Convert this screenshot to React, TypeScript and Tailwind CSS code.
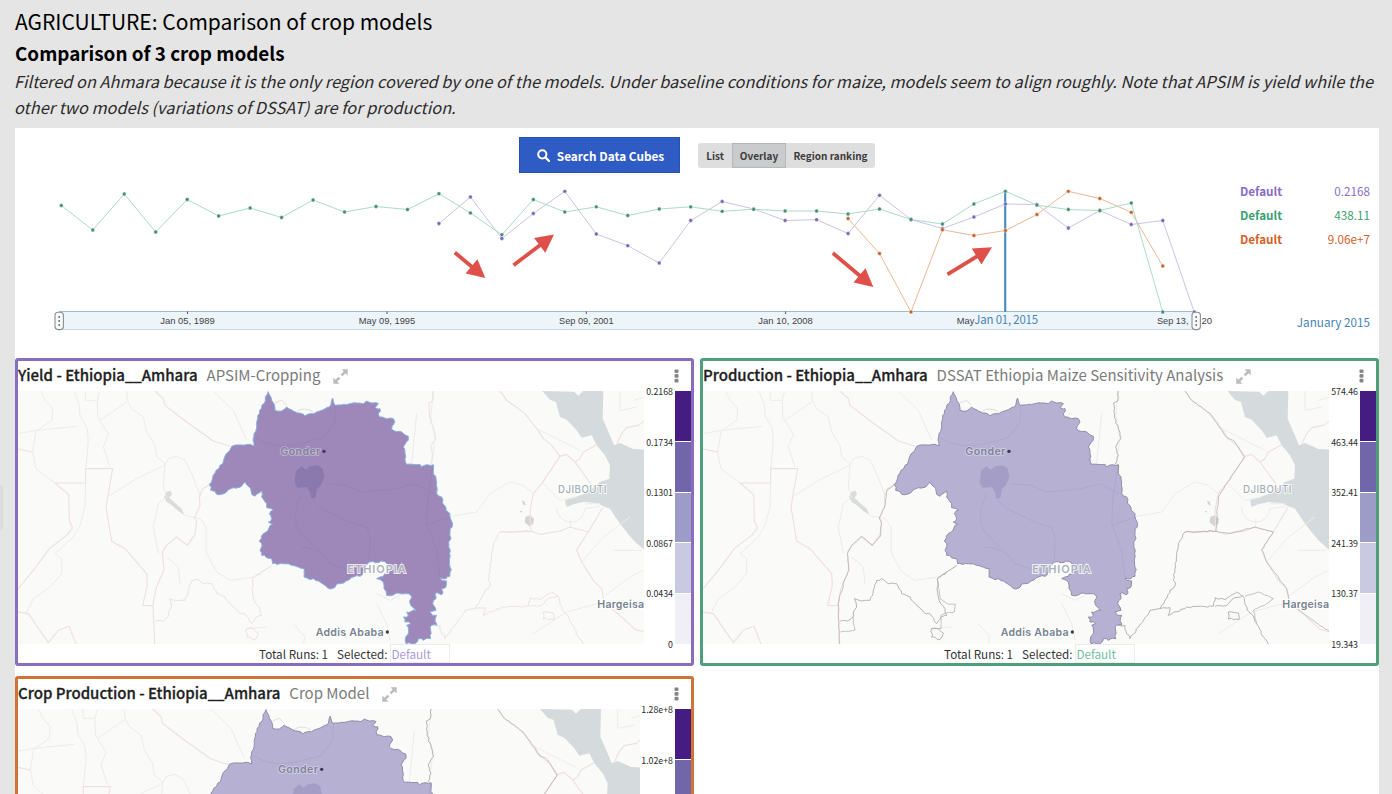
import React from "react";

const SANS = "font-['Noto_Sans_CJK_SC','Source_Sans_Pro',sans-serif]";

type Pt = [number, number];

const STEP = 31.47;
const X0 = 61.3;

const series = [
  {
    start: 12,
    line: "#cdc3e6",
    dot: "#7a66b8",
    ys: [223.5, 197, 238.5, 213.5, 191.3, 234, 245.7, 263, 220.5, 201.5, 209, 220.5, 219.7, 233.5, 195.3, 219.5, 228.5, 217, 204, 204.5, 228, 210.5, 224.5, 220.5, 312],
  },
  {
    start: 25,
    line: "#ecb892",
    dot: "#c4652f",
    ys: [218.5, 253.5, 312, 229.8, 235.5, 230.5, 214.5, 191.3, 198.5, 212.3, 266],
  },
  {
    start: 0,
    line: "#abdcc7",
    dot: "#458f70",
    ys: [205.5, 230, 194, 232, 199.5, 216, 208, 217.5, 200, 212, 206.5, 209.5, 193.7, 213, 234.7, 199.5, 212, 206.8, 215.5, 209, 206.8, 211.3, 209.3, 211, 211, 214, 209, 219.5, 224, 204, 191.3, 205, 209.5, 210.5, 203, 312],
  },
];

const arrows: [number, number, number, number][] = [
  [454.8, 252.5, 485.3, 278],
  [513.5, 265.3, 554, 234.5],
  [832.8, 253, 873.3, 287],
  [947.5, 274.3, 992, 247.2],
];

const ticks: [number, string][] = [
  [187.5, "Jan 05, 1989"],
  [387, "May 09, 1995"],
  [586.3, "Sep 09, 2001"],
  [785.6, "Jan 10, 2008"],
];

function Arrow({ p }: { p: [number, number, number, number] }) {
  const [x1, y1, x2, y2] = p;
  const len = Math.hypot(x2 - x1, y2 - y1);
  const ux = (x2 - x1) / len;
  const uy = (y2 - y1) / len;
  const bx = x2 - ux * 18;
  const by = y2 - uy * 18;
  return (
    <g fill="#df504a" stroke="none">
      <line x1={x1} y1={y1} x2={bx + ux * 2} y2={by + uy * 2} stroke="#df504a" strokeWidth="3.8" />
      <polygon points={`${x2},${y2} ${bx - uy * 9.3},${by + ux * 9.3} ${bx + uy * 9.3},${by - ux * 9.3}`} />
    </g>
  );
}

function Handle({ x }: { x: number }) {
  return (
    <g>
      <rect x={x - 4} y={312.2} width="8.4" height="17.4" rx="3" fill="#f7f8f9" stroke="#8c8f92" strokeWidth="1.1" />
      {[317, 321, 325].map((y) => (
        <circle key={y} cx={x + 0.2} cy={y} r="0.9" fill="#666" />
      ))}
    </g>
  );
}

function Chart() {
  return (
    <svg className="block h-[155px] w-[1190px] shrink-0" viewBox="40 180 1190 155">
      <rect x="59" y="311.5" width="1137" height="18" fill="#edf5fb" />
      <line x1="59" y1="311.5" x2="1196" y2="311.5" stroke="#9fbdd0" />
      <line x1="59" y1="329.5" x2="1196" y2="329.5" stroke="#c4dbe8" />
      {ticks.map(([x, t]) => (
        <g key={t}>
          <line x1={x} y1="311.5" x2={x} y2="314" stroke="#555" />
          <text x={x} y="323.6" textAnchor="middle" textLength={t.startsWith("May") ? 56.5 : 54.5} lengthAdjust="spacingAndGlyphs" fontFamily="Liberation Sans" fontSize="9.8" fill="#3d4245">
            {t}
          </text>
        </g>
      ))}
      <text x="956.8" y="323.6" textLength="17.5" lengthAdjust="spacingAndGlyphs" fontFamily="Liberation Sans" fontSize="9.8" fill="#3d4245">May</text>
      <text x="1157" y="323.6" textLength="31.5" lengthAdjust="spacingAndGlyphs" fontFamily="Liberation Sans" fontSize="9.8" fill="#3d4245">Sep 13,</text>
      <text x="1201.5" y="323.6" textLength="10.6" lengthAdjust="spacingAndGlyphs" fontFamily="Liberation Sans" fontSize="9.8" fill="#3d4245">20</text>
      {series.map((s) => (
        <polyline
          key={s.dot}
          fill="none"
          stroke={s.line}
          strokeWidth="1"
          points={s.ys.map((y, i) => `${X0 + (s.start + i) * STEP},${y}`).join(" ")}
        />
      ))}
      <line x1="1005.2" y1="191.5" x2="1005.2" y2="312" stroke="#4a8ec0" strokeWidth="2.2" />
      {series.map((s) =>
        s.ys.map((y, i) => (
          <circle key={s.dot + i} cx={X0 + (s.start + i) * STEP} cy={y} r="1.9" fill={s.dot} stroke="#fff" strokeWidth="0.4" />
        ))
      )}
      {arrows.map((a, i) => (
        <Arrow key={i} p={a} />
      ))}
      <text x="974.3" y="323.6" textLength="63.8" fontFamily="Noto Sans CJK SC" fontSize="11.4" fill="#4686b8">
        Jan 01, 2015
      </text>
      <Handle x={59} />
      <Handle x={1196} />
    </svg>
  );
}

const region: Pt[] = [
  [805, 124], [815, 150], [822, 160], [825, 180], [845, 182], [860, 170], [880, 182], [900, 188], [915, 197], [930, 190], [950, 185],
  [970, 178], [988, 170], [998, 143], [1005, 165], [1030, 162], [1070, 158], [1090, 160], [1100, 152], [1115, 158], [1135, 160],
  [1125, 172], [1140, 175], [1138, 200], [1160, 205], [1180, 205], [1185, 215], [1175, 235], [1200, 243], [1225, 258], [1225, 270],
  [1210, 290], [1215, 325], [1220, 342], [1260, 342], [1265, 350], [1282, 343], [1300, 343], [1300, 370], [1308, 380], [1310, 430],
  [1325, 440], [1338, 480], [1350, 490], [1358, 520], [1350, 545], [1353, 565], [1346, 575], [1351, 600], [1350, 678], [1338, 685],
  [1320, 683], [1325, 690], [1340, 692], [1338, 710], [1325, 715], [1328, 730], [1305, 730], [1308, 745], [1298, 760], [1308, 780],
  [1290, 785], [1298, 795], [1310, 795], [1305, 812], [1310, 825], [1295, 825], [1292, 840], [1292, 865], [1270, 870], [1255, 865],
  [1245, 880], [1218, 880], [1217, 860], [1225, 850], [1220, 825], [1232, 820], [1215, 815], [1210, 800], [1225, 795], [1220, 785],
  [1248, 780], [1232, 765], [1230, 750], [1236, 740], [1225, 730], [1195, 728], [1160, 735], [1152, 715], [1150, 695], [1130, 685],
  [1150, 678], [1176, 660], [1160, 640], [1155, 634], [1108, 635], [1092, 650], [1088, 672], [1060, 680], [1020, 700], [990, 716],
  [970, 702], [940, 685], [930, 688], [912, 680], [912, 655], [875, 645], [850, 640], [818, 640], [815, 625], [785, 615], [780, 600],
  [785, 580], [778, 572], [790, 550], [818, 522], [805, 515], [815, 505], [808, 490], [820, 480], [800, 472], [800, 460], [785, 440],
  [785, 422], [765, 438], [755, 432], [752, 415], [735, 395], [722, 410], [700, 412], [672, 430], [650, 432], [632, 420], [628, 402],
  [645, 368], [660, 345], [695, 288], [750, 282], [762, 287], [762, 250], [778, 190],
];

function roughen(pts: Pt[], amount: number, close: boolean): string {
  let seed = 7;
  const rnd = () => {
    seed = (seed * 16807) % 2147483647;
    return seed / 2147483647 - 0.5;
  };
  const out: string[] = [];
  const n = close ? pts.length : pts.length - 1;
  for (let i = 0; i < n; i++) {
    const [ax, ay] = pts[i];
    const [bx, by] = pts[(i + 1) % pts.length];
    const k = Math.max(1, Math.round(Math.hypot(bx - ax, by - ay) / 9));
    for (let j = 0; j < k; j++) {
      const t = j / k;
      const a = j === 0 ? 0 : amount;
      out.push(`${(ax + (bx - ax) * t + rnd() * a).toFixed(1)},${(ay + (by - ay) * t + rnd() * a).toFixed(1)}`);
    }
  }
  if (!close) out.push(pts[pts.length - 1].join(","));
  return "M" + out.join("L") + (close ? "Z" : "");
}

const regionPath = roughen(region, 7, true);

const pinkBorders = [
  "M165,398 L257,398 L257,355 L338,355 L330,400 L318,470 L335,573 L375,595 L440,670 L442,705 L428,765 L460,766",
  "M165,398 L206,433 L208,512 L218,533 L200,555 L148,595 L100,660 L52,718",
  "M632,402 L608,415 L598,440 L600,465 L583,503 L590,512 L585,552 L562,585 L530,560 L500,585 L487,605 L492,660 L478,690 L468,715 L459,760 L464,881",
  "M52,785 L85,790 L145,877 L175,840 L207,828 L228,881",
  "M52,295 L98,305",
  "M1500,122 L1520,150 L1575,190 L1610,235 L1630,265 L1655,285 L1680,318 L1625,400 L1600,430 L1590,480 L1593,543",
  "M1500,545 L1593,543 L1620,552 L1680,542 L1710,530 L1765,545",
  "M1808,472 L1765,545 L1730,598 L1745,635 L1780,690 L1805,715 L1812,755 L1870,805 L1905,837 L1935,845",
  "M1680,318 L1700,312 L1725,335 L1740,325 L1750,305 L1788,284",
  "M1725,335 L1772,400",
  "M1850,280 L1865,250 L1880,232 L1915,225 L1935,210",
  "M465,122 L490,145 L495,165 L560,215 L640,272 L690,288",
];

const roads = [
  "M122,122 L135,150 L158,175 L155,210 L108,243 L98,305 L108,355 L165,398",
  "M222,122 L238,165 L240,195 L262,235 L265,275 L257,355",
  "M255,122 L257,150 L292,150 L298,125 M292,150 L293,200 L325,252 L310,290 L330,350",
  "M380,122 L382,150 L395,175 L430,200 L440,245 L465,285 L470,320 L495,340 L490,410 L500,440",
  "M325,438 L410,385 L495,345 L505,325 L530,318 L555,330 L575,370 L600,435",
  "M257,398 L255,470 L240,525 L220,560 L165,610 L185,625 L185,670 L150,710 L100,745 L80,785",
  "M500,440 L475,460 L460,530 L475,610",
  "M555,495 L600,505 L618,530 L618,605 L650,665 L690,690 L760,680 L785,665 L818,645",
  "M52,250 L110,240 L230,228",
  "M300,210 L380,155",
  "M640,122 L700,180 L740,270",
  "M1300,122 L1292,200 L1305,260 L1295,340",
  "M1250,190 L1235,340",
  "M1340,500 L1430,485 L1470,430 L1530,395 L1570,405 L1600,430",
  "M1610,235 L1740,300 M1630,400 L1680,450 L1730,440",
  "M1670,470 A42,42 0 1 0 1755,475 L1800,468 M1755,460 L1800,460 M1712,505 L1712,530",
  "M1930,660 L1890,680 L1815,735",
  "M1745,635 L1810,560 L1890,500 M1840,600 L1925,600",
  "M1812,755 L1700,785 L1600,850",
  "M1130,730 L1170,750 L1200,735 M1130,760 L1160,820 L1170,870",
  "M500,620 L535,650 L540,700",
  "M800,830 L740,835 M880,820 L915,860 L910,881",
  "M1860,122 L1860,180 L1910,170 M1900,150 L1935,140",
];

const adminBorders: Pt[][] = [
  [[466, 812], [488, 812], [504, 800], [505, 785], [515, 770], [508, 745], [530, 752], [555, 750], [565, 720], [575, 690], [590, 685], [610, 700], [635, 700], [650, 730], [675, 740], [700, 770], [715, 785], [735, 790], [755, 820], [768, 800], [785, 795], [780, 775], [760, 740], [757, 685], [785, 665], [815, 645]],
  [[1300, 122], [1298, 152], [1286, 158], [1288, 200], [1300, 235], [1308, 265], [1292, 290], [1300, 315], [1290, 343]],
  [[1500, 545], [1480, 580], [1470, 640], [1465, 690], [1472, 698], [1440, 750], [1425, 775], [1395, 780], [1360, 830], [1335, 865], [1325, 850], [1320, 825], [1300, 825]],
  [[1425, 775], [1455, 772], [1450, 795], [1505, 770], [1585, 768], [1590, 742], [1620, 748], [1655, 725], [1675, 738], [1680, 762], [1715, 820], [1735, 860], [1750, 881]],
  [[1590, 768], [1625, 765], [1640, 748], [1672, 735]],
  [[1630, 785], [1660, 788], [1662, 808], [1630, 806], [1630, 785]],
  [[1500, 545], [1593, 543]],
  [[740, 835], [760, 835], [775, 848], [765, 868], [740, 860], [740, 835]],
];

const extraBorders: Pt[][] = [
  [[632, 402], [605, 420], [600, 465], [583, 503], [590, 520], [585, 560], [562, 585], [530, 558], [500, 585], [487, 610], [492, 660], [478, 690], [460, 760], [464, 881]],
  [[466, 845], [510, 840], [505, 820], [504, 800]],
  [[1680, 738], [1720, 725], [1765, 745], [1745, 760], [1705, 780], [1715, 820]],
  [[1500, 122], [1520, 150], [1575, 190], [1625, 262], [1650, 275], [1678, 320], [1625, 400], [1600, 440], [1593, 543], [1640, 548], [1710, 530], [1765, 545], [1730, 598], [1745, 635], [1805, 715], [1812, 755], [1870, 800], [1935, 845]],
  [[785, 665], [757, 685], [765, 745], [790, 762], [812, 762], [808, 785], [785, 788], [768, 795], [768, 835], [740, 835]],
];

interface MapProps {
  viewBox: string;
  className: string;
  fill: string;
  outline: string;
  dark: boolean;
}

function RegionMap({ viewBox, className, fill, outline, dark }: MapProps) {
  const label = { fontFamily: "Inter", fontWeight: 600, paintOrder: "stroke" as const };
  return (
    <svg className={className} viewBox={viewBox} preserveAspectRatio="none">
      <rect x="0" y="100" width="2000" height="800" fill="#fafaf8" />
      <path
        d="M1627,122 L1650,148 L1668,155 L1680,200 L1700,208 L1730,240 L1745,262 L1775,255 L1790,285 L1815,315 L1830,345 L1828,385 L1800,395 L1780,412 L1750,432 L1725,440 L1695,450 L1700,470 L1720,462 L1750,455 L1790,458 L1810,468 L1830,475 L1860,520 L1900,570 L1940,605 L1940,298 L1900,296 L1860,278 L1842,285 L1832,260 L1808,205 L1810,122 L1750,122 L1735,136 L1722,124 Z"
        fill="#d5dadc"
      />
      <path d="M500,424 L512,421 L516,432 L508,442 L525,458 L545,475 L553,494 L535,482 L515,464 L500,455 L492,440 Z" fill="#d8dcdc" />
      <path d="M1576,500 L1590,495 L1602,505 L1600,520 L1588,528 L1574,516 Z M1566,450 l8,4 l3,12 l-8,-4Z M1560,482 h6 v4 h-6Z" fill="#d3d5d4" />
      <g fill="none" stroke="#eeeceb" strokeWidth="3">
        {roads.map((d) => (
          <path key={d} d={d} strokeLinejoin="round" />
        ))}
      </g>
      <g fill="none" stroke="#efdfe1" strokeWidth="3.4">
        {pinkBorders.map((d) => (
          <path key={d} d={d} strokeLinejoin="round" />
        ))}
      </g>
      <g fill="none" stroke={dark ? "#a5a2a3" : "#ebe3e3"} strokeWidth={dark ? 2.4 : 3}>
        {adminBorders.map((p, i) => (
          <path key={i} d={roughen(p, 6, false)} />
        ))}
      </g>
      {dark && (
        <g fill="none" stroke="#b5adae" strokeWidth="2.2">
          {extraBorders.map((p, i) => (
            <path key={i} d={roughen(p, 3, false)} />
          ))}
        </g>
      )}
      <path d={regionPath} fill={fill} stroke={outline} strokeWidth="3" strokeLinejoin="round" />
      <path d="M825,158 L845,150 L860,165 M890,183 Q915,168 940,185" fill="none" stroke="#e6dcdc" strokeWidth="3" />
      <g fill="none" stroke="#5b3f86" strokeOpacity="0.08" strokeWidth="3">
        <path d="M765,262 Q830,300 900,280 L970,262 L1005,215 L1008,165" />
        <path d="M905,430 Q880,480 888,520 Q900,560 960,600" />
        <path d="M938,450 L965,475 L1060,520 L1100,530 L1110,560 L1108,630" />
        <path d="M975,400 L1040,405 L1085,425 L1190,415 L1245,400 L1300,430" />
        <path d="M900,590 Q960,590 990,640 L1050,660" />
        <path d="M1280,525 L1350,500 M1300,345 L1285,430 L1280,520 L1310,600 L1320,680" />
      </g>
      <path
        d="M888,362 L905,348 L918,358 L930,348 L955,345 L968,355 L973,380 L962,405 L950,418 L946,443 L934,445 L930,425 L920,410 L892,412 L884,395 Z"
        fill="#4d3f86"
        fillOpacity={dark ? 0.17 : 0.22}
      />
      <g fontSize="32" {...label}>
        <text x="841" y="314" textLength="120" fill="#82839a" stroke="#ffffff" strokeOpacity="0.4" strokeWidth="5">Gonder</text>
        <text x="1674" y="427" textLength="145" fontSize="29" fill="#9fadb3" stroke="#fff" strokeWidth="5" style={{ fontWeight: 500 }}>DJIBOUTI</text>
        <text x="1042" y="669" textLength="175" fontSize="33" fill={dark ? "#a9b3bb" : "#aeb0bd"} stroke="#fff" strokeOpacity="0.8" strokeWidth="6">ETHIOPIA</text>
        <text x="947" y="856" textLength="204" fill="#758290" stroke="#fff" strokeWidth="6">Addis Ababa</text>
        <text x="1792" y="773" textLength="140" fill="#758290" stroke="#fff" strokeWidth="6">Hargeisa</text>
      </g>
      <circle cx="972" cy="303" r="5" fill="#3c3558" />
      <circle cx="1162" cy="845" r="5" fill="#3a3f44" />
    </svg>
  );
}

function ExpandIcon() {
  return (
    <svg className="h-[15px] w-[15px]" viewBox="0 0 15 15" fill="#bcbcbc">
      <path d="M8.6 0.3H14.7V6.4L12.6 4.3L9.4 7.3L7.7 5.6L10.7 2.4Z" />
      <path d="M6.4 14.7H0.3V8.6L2.4 10.7L5.6 7.7L7.3 9.4L4.3 12.6Z" />
    </svg>
  );
}

function MoreIcon() {
  return (
    <svg className="h-[14px] w-[5px]" viewBox="0 0 5 14" fill="#858585">
      <rect x="0.5" y="0.4" width="4" height="3.7" rx="1" />
      <rect x="0.5" y="5.1" width="4" height="3.7" rx="1" />
      <rect x="0.5" y="9.8" width="4" height="3.7" rx="1" />
    </svg>
  );
}

function Legend({ labels }: { labels: string[] }) {
  return (
    <div className="flex h-[253px] flex-1 justify-end">
      <div className={`-mt-[5px] mr-[2px] flex h-[265px] flex-col justify-between text-right text-[8.8px] leading-[12px] text-[#2c2c2c] ${SANS}`}>
        {labels.map((l) => (
          <span key={l}>{l}</span>
        ))}
      </div>
      <div className="flex w-[16px] flex-col gap-px">
        <div className="flex-1 bg-[#451c82]" />
        <div className="flex-1 bg-[#7266ab]" />
        <div className="flex-1 bg-[#9d9bc7]" />
        <div className="flex-1 bg-[#cac9e2]" />
        <div className="flex-1 bg-[#f1eff6]" />
      </div>
    </div>
  );
}

interface CardProps {
  title: string;
  model: string;
  frame: string;
  selected: string;
  labels: string[];
  map: MapProps;
}

function Card({ title, model, frame, selected, labels, map }: CardProps) {
  return (
    <section className={`flex h-[308px] flex-col overflow-hidden rounded-[3px] bg-white ${frame}`}>
      <header className={`flex h-[30px] shrink-0 items-center pr-3 text-[15px] leading-[26px] whitespace-nowrap ${SANS}`}>
        <h3 className="-mt-[2px] font-medium text-[#1f1f1f] [-webkit-text-stroke:0.3px_#1f1f1f]">{title}</h3>
        <span className="-mt-[2px] ml-[9px] text-[#7b7b7b]">{model}</span>
        <span className="ml-[13px]">
          <ExpandIcon />
        </span>
        <span className="ml-auto">
          <MoreIcon />
        </span>
      </header>
      <div className="flex shrink-0">
        <RegionMap {...map} />
        <Legend labels={labels} />
      </div>
      <footer className={`flex h-[19px] shrink-0 items-center pl-[241px] text-[11.7px] leading-[19px] text-[#333] ${SANS}`}>
        <span>Total Runs: 1</span>
        <span className="ml-[9px]">Selected:</span>
        <span className={`ml-[3px] h-[19px] w-[60px] border border-[#ececec] leading-[17px] ${selected}`}>Default</span>
      </footer>
    </section>
  );
}

const cards: CardProps[] = [
  {
    title: "Yield - Ethiopia__Amhara",
    model: "APSIM-Cropping",
    frame: "border-[3px] border-[#896dbf]",
    selected: "text-[#ab97dc]",
    labels: ["0.2168", "0.1734", "0.1301", "0.0867", "0.0434", "0"],
    map: { viewBox: "54 122 1878 759", className: "block h-[253px] w-[626px]", fill: "#9d88b9", outline: "#86b4e4", dark: false },
  },
  {
    title: "Production - Ethiopia__Amhara",
    model: "DSSAT Ethiopia Maize Sensitivity Analysis",
    frame: "border-[3px] border-[#4f9f7c]",
    selected: "text-[#72bd9e]",
    labels: ["574.46", "463.44", "352.41", "241.39", "130.37", "19.343"],
    map: { viewBox: "54 122 1878 759", className: "block h-[253px] w-[626px]", fill: "#b6b0d3", outline: "#928ca8", dark: true },
  },
  {
    title: "Crop Production - Ethiopia__Amhara",
    model: "Crop Model",
    frame: "border-[3px] border-[#cf7436]",
    selected: "text-[#e0965f]",
    labels: ["1.28e+8", "1.02e+8", "7.68e+7", "5.12e+7", "2.56e+7", "0"],
    map: { viewBox: "61 122 1866 759", className: "block h-[253px] w-[622px]", fill: "#b6b0d3", outline: "#928ca8", dark: true },
  },
];

const values = [
  { color: "text-[#8a6cc8]", value: "0.2168" },
  { color: "text-[#3d9f72]", value: "438.11" },
  { color: "text-[#d4622a]", value: "9.06e+7" },
];

export default function App() {
  return (
    <main className={`relative h-[794px] w-[1392px] overflow-hidden bg-[#e5e5e5] pr-3 pl-[15px] ${SANS}`}>
      <div className="absolute top-[485px] left-0 h-[45px] w-[3px] rounded-r bg-[#dcdcdc]" />
      <header className="h-[128px] pt-[8px] text-black">
        <h1 className="text-[21px] leading-[27px]">AGRICULTURE: Comparison of crop models</h1>
        <h2 className="mt-[2px] text-[18.85px] leading-[32px] font-bold">Comparison of 3 crop models</h2>
        <p className="-mt-px -ml-px text-[16.33px] leading-[26.4px] whitespace-nowrap text-[#2b2b2b] italic">
          Filtered on Ahmara because it is the only region covered by one of the models. Under baseline conditions for maize, models seem to align roughly. Note that APSIM is yield while the
          <br />
          other two models (variations of DSSAT) are for production.
        </p>
      </header>
      <div className="h-[780px] w-[1364px] bg-white pt-[9px]">
        <div className="flex h-[36px] items-center pl-[504px]">
          <button className="flex h-[36px] w-[161px] items-center justify-center border border-[#2951b0] bg-[#2f5cc4] pt-px pl-[2px] text-[11.8px] font-bold whitespace-nowrap text-white">
            <svg className="mr-[7px] h-[13px] w-[13px]" viewBox="0 0 13 13" fill="none" stroke="#fff" strokeWidth="2">
              <circle cx="5.3" cy="5.3" r="4.1" />
              <path d="M8.4 8.4L12 12" strokeLinecap="round" strokeWidth="2.2" />
            </svg>
            Search Data Cubes
          </button>
          <div className="ml-[18px] flex h-[25px] overflow-hidden rounded-[3px] bg-[#dedede] text-[10px] leading-[26px] font-bold whitespace-nowrap text-[#3c3c3c]">
            <span className="w-[34px] text-center">List</span>
            <span className="w-[54px] border border-[#b5b7b9] bg-[#c9cbcd] text-center leading-[24px]">Overlay</span>
            <span className="w-[89px] text-center">Region ranking</span>
          </div>
        </div>
        <div className="flex h-[185px] pt-[7px] pl-[25px]">
          <Chart />
          <div className="-mt-px ml-[10px] flex w-[130px] flex-col text-[11.7px] leading-[24px]">
            {values.map((v) => (
              <div key={v.value} className={`flex justify-between ${v.color}`}>
                <span className="font-bold">Default</span>
                <span>{v.value}</span>
              </div>
            ))}
            <div className="mt-[59px] text-right text-[#4484b8]">January 2015</div>
          </div>
        </div>
        <div className="grid grid-cols-2 gap-x-[6px] gap-y-[10px]">
          {cards.map((c) => (
            <Card key={c.title} {...c} />
          ))}
        </div>
      </div>
    </main>
  );
}
